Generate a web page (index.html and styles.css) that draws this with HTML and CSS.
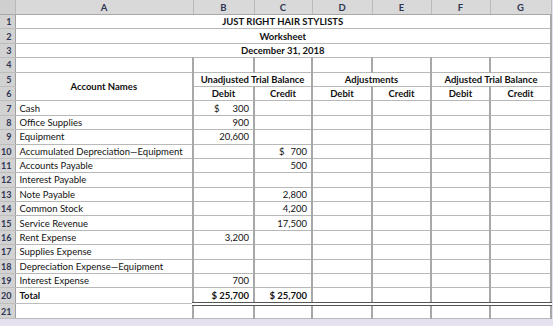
FILE: index.html
```html
<!DOCTYPE html>
<html lang="en">
<head>
  <meta charset="UTF-8">
  <title>Worksheet - Just Right Hair Stylists</title>
  <link rel="stylesheet" href="styles.css">
</head>
<body>

<table class="sheet">
  <colgroup>
    <col class="c-num">
    <col class="c-a">
    <col class="c-b">
    <col class="c-c">
    <col class="c-d">
    <col class="c-e">
    <col class="c-f">
    <col class="c-g">
  </colgroup>
  <thead>
    <tr class="col-heads">
      <th class="corner"></th>
      <th>A</th><th>B</th><th>C</th><th>D</th><th>E</th><th>F</th><th>G</th>
    </tr>
  </thead>
  <tbody>
    <tr><td class="num">1</td><td class="title" colspan="7">JUST RIGHT HAIR STYLISTS</td></tr>
    <tr><td class="num">2</td><td class="title" colspan="7">Worksheet</td></tr>
    <tr><td class="num">3</td><td class="title" colspan="7">December 31, 2018</td></tr>
    <tr><td class="num">4</td><td></td><td></td><td></td><td></td><td></td><td></td><td></td></tr>
    <tr>
      <td class="num">5</td>
      <td class="head" rowspan="2">Account Names</td>
      <td class="head" colspan="2">Unadjusted Trial Balance</td>
      <td class="head" colspan="2">Adjustments</td>
      <td class="head" colspan="2">Adjusted Trial Balance</td>
    </tr>
    <tr>
      <td class="num">6</td>
      <td class="head">Debit</td><td class="head">Credit</td>
      <td class="head">Debit</td><td class="head">Credit</td>
      <td class="head">Debit</td><td class="head">Credit</td>
    </tr>
  </tbody>
  <tbody id="rows"></tbody>
</table>

<script>
  // account lines: name, unadjusted debit, unadjusted credit
  var cuentas = [
    ["Cash", "$|300", ""],
    ["Office Supplies", "900", ""],
    ["Equipment", "20,600", ""],
    ["Accumulated Depreciation\u2014Equipment", "", "$|700"],
    ["Accounts Payable", "", "500"],
    ["Interest Payable", "", ""],
    ["Note Payable", "", "2,800"],
    ["Common Stock", "", "4,200"],
    ["Service Revenue", "", "17,500"],
    ["Rent Expense", "3,200", ""],
    ["Supplies Expense", "", ""],
    ["Depreciation Expense\u2014Equipment", "", ""],
    ["Interest Expense", "700", ""]
  ];

  function celdaValor(v, clase) {
    if (v.indexOf('|') > -1) {
      var p = v.split('|');
      return '<td class="amt ' + clase + '"><span class="cur">' + p[0] + '</span>' + p[1] + '</td>';
    }
    return '<td class="amt ' + clase + '">' + v + '</td>';
  }

  var html = '';
  cuentas.forEach(function (c, i) {
    html += '<tr><td class="num">' + (i + 7) + '</td>' +
      '<td class="name">' + c[0] + '</td>' +
      celdaValor(c[1], 'debe') + celdaValor(c[2], 'haber') +
      '<td></td><td></td><td></td><td></td></tr>';
  });

  html += '<tr class="total"><td class="num">20</td><td class="name">Total</td>' +
    '<td class="amt">$ 25,700</td><td class="amt">$ 25,700</td>' +
    '<td></td><td></td><td></td><td></td></tr>';
  html += '<tr class="last"><td class="num">21</td><td></td><td></td><td></td><td></td><td></td><td></td><td></td></tr>';

  document.getElementById('rows').innerHTML = html;
</script>

</body>
</html>
```

FILE: styles.css
```css
body {
  margin: 0;
  padding: 0;
  background-color: #e5e1ee;
  font-family: 'Lato', 'Open Sans', sans-serif;
  font-size: 9.5px;
  color: #111;
}

.sheet {
  border-collapse: collapse;
  table-layout: fixed;
  width: 551px;
  background-color: #fff;
}

.c-num { width: 15px; }
.c-a { width: 178px; }
.c-b { width: 61px; }
.c-c { width: 58px; }
.c-d { width: 60px; }
.c-e { width: 59px; }
.c-f { width: 59px; }
.c-g { width: 61px; }

.sheet td, .sheet th {
  height: 13.4px;
  padding: 0 4px;
  border-bottom: 1px solid #b8b8b8;
  border-right: 2px solid #a8a8a8;
  white-space: nowrap;
  overflow: hidden;
  line-height: 13px;
}

.col-heads th {
  height: 14px;
  background-color: #d9d9d9;
  color: #2f3552;
  font-weight: bold;
  text-align: center;
  border-right: 1px solid #bababa;
  border-bottom: 1px solid #a8a8a8;
}

.col-heads th.corner {
  background-color: #cfcfcf;
}

.sheet td.num {
  background-color: #d2d2d2;
  color: #2f3552;
  font-weight: bold;
  text-align: right;
  padding: 0 3px 0 0;
  border-right: 1px solid #a0a0a0;
  border-bottom: 1px solid #bdbdbd;
  font-size: 9px;
}

.sheet td.title {
  text-align: center;
  font-weight: bold;
}

.sheet td.head {
  text-align: center;
  font-weight: bold;
}

.sheet td.name {
  padding-left: 4px;
}

.sheet td.amt {
  text-align: right;
  padding-right: 4px;
}

.cur {
  float: left;
  margin-left: 16px;
}

.haber .cur {
  margin-left: 20px;
}

.total td {
  font-weight: bold;
  border-bottom: 4px double #555;
}

.total td:nth-child(n+3) {
  border-top: 1px solid #111;
}

.total td.num, .total td.name {
  border-bottom: 1px solid #bdbdbd;
}

.last td {
  height: 12px;
}
```
